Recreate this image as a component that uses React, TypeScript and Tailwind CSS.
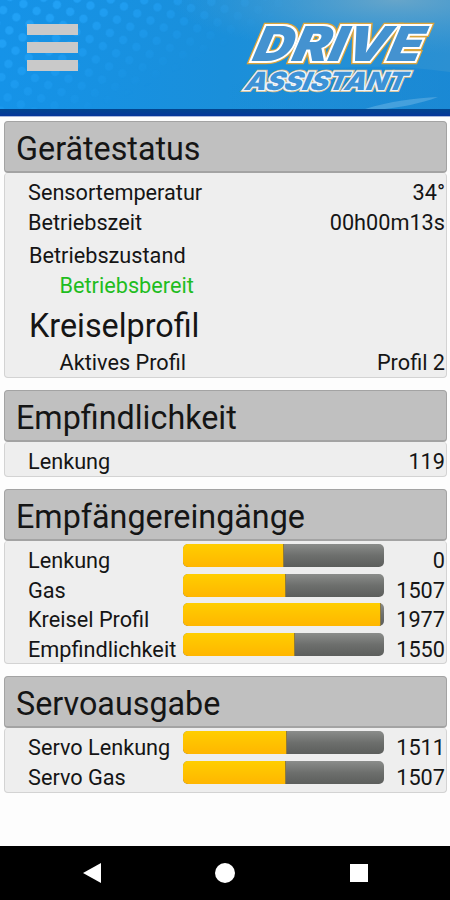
import type { ReactNode } from "react";

type Channel = { label: string; value: string; fill: number };

const inputs: Channel[] = [
  { label: "Lenkung", value: "0", fill: 50.4 },
  { label: "Gas", value: "1507", fill: 51.2 },
  { label: "Kreisel Profil", value: "1977", fill: 98.4 },
  { label: "Empfindlichkeit", value: "1550", fill: 55.5 },
];

const outputs: Channel[] = [
  { label: "Servo Lenkung", value: "1511", fill: 51.5 },
  { label: "Servo Gas", value: "1507", fill: 51.2 },
];

function Logo() {
  return (
    <svg viewBox="0 0 200 80" className="h-[80px] w-[200px]" aria-label="Drive Assistant">
      <g
        fontFamily="Inter, Roboto, sans-serif"
        fontWeight="900"
        strokeLinejoin="miter"
        strokeMiterlimit="3"
      >
        <g transform="translate(11 46) skewX(-23)" fontSize="48">
          <text textLength="168" lengthAdjust="spacingAndGlyphs" fill="none" stroke="#dba53c" strokeWidth="6.5">DRIVE</text>
          <text textLength="168" lengthAdjust="spacingAndGlyphs" fill="none" stroke="#ffffff" strokeWidth="4">DRIVE</text>
          <text textLength="168" lengthAdjust="spacingAndGlyphs" fill="#4492d0">DRIVE</text>
        </g>
        <g transform="translate(5 75) skewX(-23)" fontSize="25">
          <text textLength="161" lengthAdjust="spacingAndGlyphs" fill="none" stroke="#cfb37c" strokeWidth="4">ASSISTANT</text>
          <text textLength="161" lengthAdjust="spacingAndGlyphs" fill="none" stroke="#eef5fb" strokeWidth="2.6">ASSISTANT</text>
          <text textLength="161" lengthAdjust="spacingAndGlyphs" fill="#3c92d6">ASSISTANT</text>
        </g>
      </g>
    </svg>
  );
}

function HeaderBackdrop() {
  return (
    <svg viewBox="0 0 450 109" preserveAspectRatio="none" className="absolute inset-0 h-full w-full">
      <defs>
        <linearGradient id="sky" x1="0" y1="0" x2="1" y2="0">
          <stop offset="0" stopColor="#1593e8" />
          <stop offset="0.5" stopColor="#1a8fda" />
          <stop offset="1" stopColor="#2b90d2" />
        </linearGradient>
        <radialGradient id="haze" cx="0.88" cy="0" r="0.5">
          <stop offset="0" stopColor="#72a9c8" stopOpacity="0.85" />
          <stop offset="1" stopColor="#4e9fd0" stopOpacity="0" />
        </radialGradient>
        <pattern id="dots" width="15" height="15" patternUnits="userSpaceOnUse" patternTransform="rotate(28)">
          <circle cx="7.5" cy="7.5" r="4.2" fill="#25a5fa" />
        </pattern>
        <linearGradient id="fade" x1="0" y1="0.4" x2="0.42" y2="0.6">
          <stop offset="0" stopColor="#fff" stopOpacity="0.75" />
          <stop offset="1" stopColor="#fff" stopOpacity="0" />
        </linearGradient>
        <linearGradient id="wave" x1="0" y1="0" x2="1" y2="0">
          <stop offset="0" stopColor="#0f84d6" stopOpacity="0" />
          <stop offset="1" stopColor="#0f84d6" stopOpacity="0.6" />
        </linearGradient>
        <mask id="dotMask">
          <rect width="450" height="109" fill="url(#fade)" />
        </mask>
      </defs>
      <rect width="450" height="109" fill="url(#sky)" />
      <rect width="450" height="109" fill="url(#dots)" mask="url(#dotMask)" />
      <rect width="450" height="109" fill="url(#haze)" />
      <path d="M225 86C300 66 380 62 450 72V109H225Z" fill="url(#wave)" />
      <path d="M365 109C390 101 415 98 438 97C420 104 400 107 385 109Z" fill="#6db6e6" opacity="0.5" />
    </svg>
  );
}

function Panel({ title, className, children }: { title: string; className: string; children: ReactNode }) {
  return (
    <section className={`flex flex-col ${className}`}>
      <h2 className="h-[52px] shrink-0 rounded-[4px] border border-b-2 border-[#a3a3a3] bg-[#c0c0c0] pl-[11px] text-[32.3px] leading-[55px]">
        {title}
      </h2>
      <div className="flex-1 rounded-[4px] border border-t-0 border-[#d3d3d3] bg-[#eeeeee] pt-[4px]">{children}</div>
    </section>
  );
}

function Row({ label, value, className = "pl-[23px]" }: { label: string; value?: string; className?: string }) {
  return (
    <div className={`flex h-[29.6px] items-center justify-between pr-px pt-[2px] ${className}`}>
      <span>{label}</span>
      {value && <span>{value}</span>}
    </div>
  );
}

function ChannelRow({ label, value, fill }: Channel) {
  return (
    <div className="flex h-[29.6px] items-center pl-[23px] pr-px pt-[2px]">
      <span className="w-[155px] shrink-0 whitespace-nowrap">{label}</span>
      <div className="mb-[10px] h-[23px] w-[201px] shrink-0 overflow-hidden rounded-[5px] bg-linear-to-b from-[#8b8d8b] via-[#6d6f6d] to-[#5c5e5c]">
        <div
          className="h-full border-r border-[#8f7a3a] bg-linear-to-b from-[#ffce00] to-[#ffb600]"
          style={{ width: `${fill}%` }}
        />
      </div>
      <span className="flex-1 text-right">{value}</span>
    </div>
  );
}

export default function App() {
  return (
    <div className="flex h-[900px] w-[450px] flex-col overflow-hidden bg-[#fdfdfd] font-[Roboto,sans-serif] text-[21.7px] leading-none text-[#151515]">
      <header className="relative h-[117px] shrink-0 border-b border-[#a9b9dd]">
        <div className="relative flex h-[109px] items-start justify-between pl-[27px] pr-[12px]">
          <HeaderBackdrop />
          <button type="button" aria-label="Menü" className="relative mt-[24px] flex flex-col gap-[7.5px]">
            <span className="h-[10.5px] w-[51px] bg-[#c9c9c9]" />
            <span className="h-[10.5px] w-[51px] bg-[#c9c9c9]" />
            <span className="h-[10.5px] w-[51px] bg-[#c9c9c9]" />
          </button>
          <div className="relative mt-[15px]">
            <Logo />
          </div>
        </div>
        <div className="h-[7px] bg-linear-to-b from-[#02468f] to-[#06379b]" />
      </header>

      <main className="flex flex-1 flex-col pl-[4px] pr-[3px] pt-[4px]">
        <Panel title="Gerätestatus" className="h-[257px]">
          <Row label="Sensortemperatur" value="34°" />
          <Row label="Betriebszeit" value="00h00m13s" />
          <Row label="Betriebszustand" className="mt-[4px] pl-[24px]" />
          <Row label="Betriebsbereit" className="pl-[54.5px] text-[#1fbd1f]" />
          <h3 className="h-[52px] pl-[24px] text-[32.3px] leading-[55px]">Kreiselprofil</h3>
          <Row label="Aktives Profil" value="Profil 2" className="-mt-[4px] pl-[54.5px]" />
        </Panel>

        <Panel title="Empfindlichkeit" className="mt-[12px] h-[87px]">
          <Row label="Lenkung" value="119" />
        </Panel>

        <Panel title="Empfängereingänge" className="mt-[12px] h-[175px]">
          {inputs.map((c) => (
            <ChannelRow key={c.label} {...c} />
          ))}
        </Panel>

        <Panel title="Servoausgabe" className="mt-[12px] h-[117px]">
          {outputs.map((c) => (
            <ChannelRow key={c.label} {...c} />
          ))}
        </Panel>
      </main>

      <nav className="flex h-[54px] shrink-0 items-center justify-between bg-black pl-[82px] pr-[82px] text-white">
        <svg viewBox="0 0 20 22" className="h-[22px] w-[20px]" fill="currentColor">
          <path d="M1 11L19 1V21Z" />
        </svg>
        <span className="mr-[3px] size-[20px] rounded-full bg-white" />
        <span className="size-[18px] bg-white" />
      </nav>
    </div>
  );
}
